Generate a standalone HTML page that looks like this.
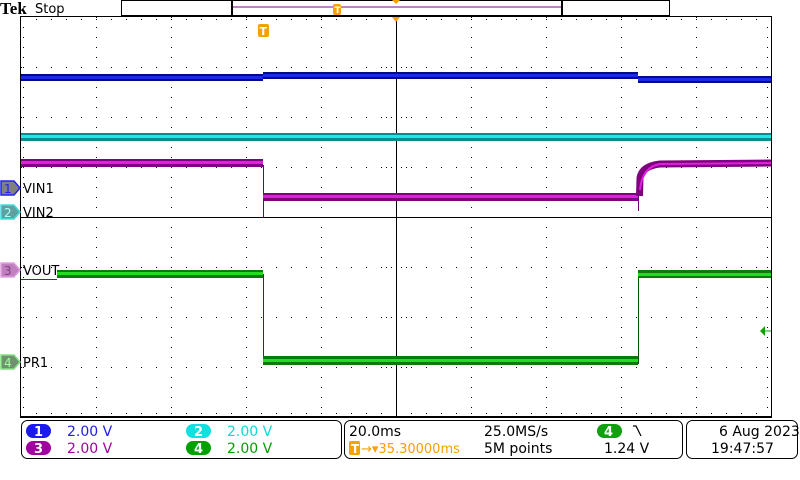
<!DOCTYPE html>
<html><head><meta charset="utf-8"><style>
html,body{margin:0;padding:0;background:#fff;width:800px;height:480px;overflow:hidden}
svg{display:block}
text{font-family:"DejaVu Sans","Liberation Sans",sans-serif}
</style></head><body>
<svg width="800" height="480" xmlns="http://www.w3.org/2000/svg">
<!-- top bar -->
<text x="0" y="14" font-weight="bold" font-size="17" style="font-family:'Liberation Serif',serif">Tek</text>
<text x="35" y="13" font-size="13">Stop</text>
<rect x="121.5" y="0.5" width="548" height="15" fill="#fff" stroke="#000"/>
<rect x="232" y="0" width="330" height="16" fill="#fff" stroke="#000" stroke-width="2"/>
<line x1="233" y1="7" x2="561" y2="7" stroke="#8a008a"/>
<rect x="333" y="4" width="8" height="11" rx="2" fill="#f7a000"/>
<text x="334.5" y="13" font-size="9" fill="#fff" font-weight="bold">T</text>
<polygon points="392,0 400,0 396,4" fill="#f7a000"/>
<!-- grid -->
<g stroke="#000" stroke-width="1">
<g stroke-dasharray="1 9">
<line x1="96.5" y1="17" x2="96.5" y2="417"/>
<line x1="171.5" y1="17" x2="171.5" y2="417"/>
<line x1="246.5" y1="17" x2="246.5" y2="417"/>
<line x1="321.5" y1="17" x2="321.5" y2="417"/>
<line x1="471.5" y1="17" x2="471.5" y2="417"/>
<line x1="546.5" y1="17" x2="546.5" y2="417"/>
<line x1="621.5" y1="17" x2="621.5" y2="417"/>
<line x1="696.5" y1="17" x2="696.5" y2="417"/>
<line x1="23.5" y1="27" x2="23.5" y2="417"/>
<line x1="767.5" y1="27" x2="767.5" y2="417"/>
</g>
<g stroke-dasharray="1 14">
<line x1="21" y1="67.5" x2="771" y2="67.5"/>
<line x1="21" y1="117.5" x2="771" y2="117.5"/>
<line x1="21" y1="167.5" x2="771" y2="167.5"/>
<line x1="21" y1="267.5" x2="771" y2="267.5"/>
<line x1="21" y1="317.5" x2="771" y2="317.5"/>
<line x1="21" y1="367.5" x2="771" y2="367.5"/>
<line x1="36" y1="19.5" x2="771" y2="19.5"/>
<line x1="36" y1="413.5" x2="771" y2="413.5"/>
</g>
<g stroke-dasharray="1 4">
<line x1="386" y1="67.5" x2="407" y2="67.5"/>
<line x1="386" y1="117.5" x2="407" y2="117.5"/>
<line x1="386" y1="167.5" x2="407" y2="167.5"/>
<line x1="386" y1="267.5" x2="407" y2="267.5"/>
<line x1="386" y1="317.5" x2="407" y2="317.5"/>
<line x1="386" y1="367.5" x2="407" y2="367.5"/>
</g>
<line x1="396.5" y1="17" x2="396.5" y2="417"/>
<line x1="20" y1="217.5" x2="771" y2="217.5"/>
<line x1="20.5" y1="16" x2="20.5" y2="418"/>
<line x1="20" y1="16.5" x2="771" y2="16.5"/>
<line x1="771.5" y1="16" x2="771.5" y2="418"/>
<line x1="20" y1="417" x2="772" y2="417" stroke-width="2"/>
</g>
<polygon points="392,17 400,17 396,22" fill="#f7a000"/>
<rect x="258" y="24" width="11" height="13" rx="2" fill="#f7a000"/>
<text x="259.5" y="35" font-size="11" font-weight="bold" fill="#fff">T</text>
<!-- blue ch1 -->
<rect x="21" y="74" width="242" height="7" fill="#000a8a"/>
<rect x="21" y="76" width="242" height="3" fill="#1a2ae8"/>
<rect x="263" y="72" width="375" height="7" fill="#000a8a"/>
<rect x="263" y="74" width="375" height="3" fill="#1a2ae8"/>
<rect x="638" y="76" width="133" height="7" fill="#000a8a"/>
<rect x="638" y="78" width="133" height="3" fill="#1a2ae8"/>
<!-- cyan ch2 -->
<rect x="21" y="133" width="750" height="8" fill="#0a8a8a"/>
<rect x="21" y="135" width="750" height="3" fill="#20e8e8"/>
<!-- magenta ch3 -->
<rect x="21" y="159" width="242" height="8" fill="#800080"/>
<rect x="21" y="161" width="242" height="3" fill="#e020e0"/>
<line x1="263.5" y1="165" x2="263.5" y2="218" stroke="#700070"/>
<rect x="263" y="193" width="375" height="8" fill="#800080"/>
<rect x="263" y="195" width="375" height="3" fill="#e020e0"/>
<line x1="638.5" y1="195" x2="638.5" y2="211" stroke="#700070"/>
<path d="M639.5 196 L640 178 Q642 166 660 164 L771 163" stroke="#800080" stroke-width="7" fill="none"/>
<path d="M640 190 Q642 167 660 164 L771 163" stroke="#e020e0" stroke-width="2" fill="none"/>
<!-- green ch4 -->
<line x1="21" y1="279.5" x2="57" y2="279.5" stroke="#006000"/>
<rect x="57" y="270" width="206" height="8" fill="#0a7a0a"/>
<rect x="57" y="272" width="206" height="3" fill="#20dd20"/>
<line x1="263.5" y1="274" x2="263.5" y2="364" stroke="#005000"/>
<rect x="263" y="356" width="375" height="9" fill="#0a7a0a"/>
<rect x="263" y="359" width="375" height="3" fill="#20dd20"/>
<line x1="638.5" y1="274" x2="638.5" y2="364" stroke="#005000"/>
<rect x="638" y="270" width="133" height="8" fill="#0a7a0a"/>
<rect x="638" y="273" width="133" height="3" fill="#20dd20"/>
<!-- trigger level marker -->
<polygon points="760,331 765,326 765,336" fill="#10a010"/>
<line x1="765" y1="331" x2="771" y2="331" stroke="#10a010"/>
<!-- channel markers -->
<g font-size="13">
<polygon points="1,181 14,181 20,188 14,195 1,195" fill="#808080" stroke="#2020ff" stroke-width="1.5"/>
<text x="4" y="193" fill="#2020ff" font-size="12">1</text>
<text x="23" y="193" fill="#000">VIN1</text>
<polygon points="1,205 14,205 20,212 14,219 1,219" fill="#60a0a0" stroke="#40e0e0" stroke-width="1.5"/>
<text x="4" y="217" fill="#b0ffff" font-size="12">2</text>
<text x="23" y="217" fill="#000">VIN2</text>
<polygon points="1,263 14,263 20,270 14,277 1,277" fill="#c080c0" stroke="#e0a0e0" stroke-width="1.5"/>
<text x="4" y="275" fill="#804080" font-size="12">3</text>
<text x="23" y="275" fill="#000">VOUT</text>
<polygon points="1,355 14,355 20,362 14,369 1,369" fill="#709070" stroke="#80e080" stroke-width="1.5"/>
<text x="4" y="367" fill="#a0ffa0" font-size="12">4</text>
<text x="23" y="367" fill="#000">PR1</text>
</g>
<!-- bottom panels -->
<rect x="21.5" y="420.5" width="320" height="38" rx="6" fill="#fff" stroke="#000"/>
<rect x="344.5" y="420.5" width="338" height="38" rx="6" fill="#fff" stroke="#000"/>
<rect x="686.5" y="420.5" width="111" height="38" rx="6" fill="#fff" stroke="#000"/>
<g font-size="14">
<rect x="26" y="424" width="25" height="14" rx="7" fill="#1a1aee"/><text x="34" y="436" fill="#fff" font-size="13" font-weight="bold">1</text>
<text x="67" y="436" fill="#2020e0">2.00 V</text>
<rect x="26" y="441" width="25" height="14" rx="7" fill="#a000a0"/><text x="34" y="453" fill="#fff" font-size="13" font-weight="bold">3</text>
<text x="67" y="453" fill="#a000a0">2.00 V</text>
<rect x="186" y="424" width="25" height="14" rx="7" fill="#10e0e0"/><text x="194" y="436" fill="#fff" font-size="13" font-weight="bold">2</text>
<text x="227" y="436" fill="#10d8d8">2.00 V</text>
<rect x="186" y="441" width="25" height="14" rx="7" fill="#00a000"/><text x="194" y="453" fill="#fff" font-size="13" font-weight="bold">4</text>
<text x="227" y="453" fill="#00a000">2.00 V</text>
<text x="349" y="436" fill="#000">20.0ms</text>
<rect x="349" y="441" width="11" height="14" rx="2" fill="#f7a000"/><text x="351" y="453" fill="#fff" font-size="12" font-weight="bold">T</text>
<text x="361" y="453" fill="#f7a000" font-size="13">→▾35.30000ms</text>
<text x="484" y="436" fill="#000">25.0MS/s</text>
<text x="484" y="453" fill="#000">5M points</text>
<rect x="597" y="424" width="25" height="14" rx="7" fill="#10a010"/><text x="604" y="436" fill="#fff" font-size="13" font-weight="bold">4</text>
<path d="M633 426 L636 426 L641 436" stroke="#000" stroke-width="1.2" fill="none"/>
<text x="604" y="453" fill="#000">1.24 V</text>
<text x="719" y="436" fill="#000">6 Aug 2023</text>
<text x="711" y="453" fill="#000">19:47:57</text>
</g>
</svg>
</body></html>
